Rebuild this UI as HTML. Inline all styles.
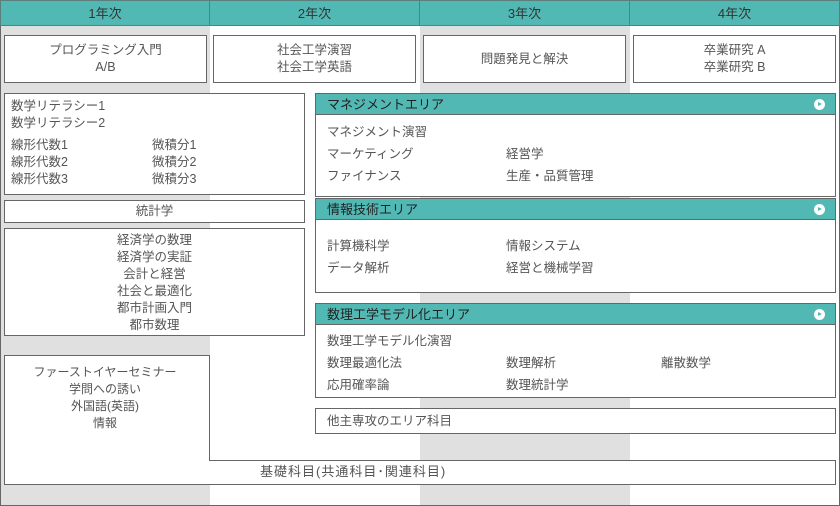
<!DOCTYPE html>
<html><head><meta charset="utf-8"><style>
*{margin:0;padding:0;box-sizing:border-box}
body{width:840px;height:506px;position:relative;overflow:hidden;font-family:"Liberation Sans","Noto Sans CJK JP",sans-serif;color:#555;font-size:12.5px;background:#fff}
.col{position:absolute;top:0;height:506px}
.hd{position:absolute;top:0;height:26px;background:#52b8b4;border-right:1px solid #5a7f7d;border-bottom:1px solid #5a7f7d;text-align:center;line-height:26px;font-size:13px;color:#333}
.b{position:absolute;background:#fff;border:1px solid #666}
.c{text-align:center;display:flex;flex-direction:column;justify-content:center;line-height:17px}
.ah{height:21px;background:#52b8b4;border-bottom:1px solid #666;color:#222;font-size:13px;line-height:21px;padding-left:11px;position:relative}
.ah i{position:absolute;right:10px;top:5px;width:11px;height:11px;border-radius:50%;background:#fff}
.ah i:after{content:"";position:absolute;left:4px;top:3px;border-left:4px solid #52b8b4;border-top:2.5px solid transparent;border-bottom:2.5px solid transparent}
.t{position:absolute;white-space:nowrap}
</style></head><body>
<div class="col" style="left:0;width:210px;background:#e0e0e0"></div>
<div class="col" style="left:420px;width:210px;background:#e0e0e0"></div>
<div style="position:absolute;left:0;top:0;width:840px;height:506px;border:1px solid #666"></div>
<div class="hd" style="left:0;width:210px;border-left:1px solid #5a7f7d;border-top:1px solid #5a7f7d">1年次</div>
<div class="hd" style="left:210px;width:210px;border-top:1px solid #5a7f7d">2年次</div>
<div class="hd" style="left:420px;width:210px;border-top:1px solid #5a7f7d">3年次</div>
<div class="hd" style="left:630px;width:210px;border-top:1px solid #5a7f7d">4年次</div>

<div class="b c" style="left:4px;top:35px;width:203px;height:48px">プログラミング入門<br>A/B</div>
<div class="b c" style="left:213px;top:35px;width:203px;height:48px">社会工学演習<br>社会工学英語</div>
<div class="b c" style="left:423px;top:35px;width:203px;height:48px">問題発見と解決</div>
<div class="b c" style="left:633px;top:35px;width:203px;height:48px">卒業研究 A<br>卒業研究 B</div>

<div class="b" style="left:4px;top:93px;width:301px;height:102px">
<div class="t" style="left:6px;top:4px;line-height:17px">数学リテラシー1<br>数学リテラシー2</div>
<div class="t" style="left:6px;top:43px;line-height:17px">線形代数1<br>線形代数2<br>線形代数3</div>
<div class="t" style="left:147px;top:43px;line-height:17px">微積分1<br>微積分2<br>微積分3</div>
</div>
<div class="b c" style="left:4px;top:200px;width:301px;height:23px">統計学</div>
<div class="b c" style="left:4px;top:228px;width:301px;height:108px;padding-top:2px">経済学の数理<br>経済学の実証<br>会計と経営<br>社会と最適化<br>都市計画入門<br>都市数理</div>

<div class="b" style="left:315px;top:93px;width:521px;height:104px">
<div class="ah">マネジメントエリア<i></i></div>
<div class="t" style="left:11px;top:27px;line-height:22px">マネジメント演習<br>マーケティング<br>ファイナンス</div>
<div class="t" style="left:190px;top:49px;line-height:22px">経営学<br>生産・品質管理</div>
</div>
<div class="b" style="left:315px;top:198px;width:521px;height:95px">
<div class="ah">情報技術エリア<i></i></div>
<div class="t" style="left:11px;top:36px;line-height:22px">計算機科学<br>データ解析</div>
<div class="t" style="left:190px;top:36px;line-height:22px">情報システム<br>経営と機械学習</div>
</div>
<div class="b" style="left:315px;top:303px;width:521px;height:95px">
<div class="ah">数理工学モデル化エリア<i></i></div>
<div class="t" style="left:11px;top:26px;line-height:22px">数理工学モデル化演習<br>数理最適化法<br>応用確率論</div>
<div class="t" style="left:190px;top:48px;line-height:22px">数理解析<br>数理統計学</div>
<div class="t" style="left:345px;top:48px;line-height:22px">離散数学</div>
</div>
<div class="b" style="left:315px;top:408px;width:521px;height:26px;line-height:24px;padding-left:11px">他主専攻のエリア科目</div>

<svg style="position:absolute;left:0;top:0" width="840" height="506"><path d="M4.5 355.5H209.5V460.5H835.5V484.5H4.5Z" fill="#fff" stroke="#666"/></svg>
<div class="t" style="left:0;width:210px;top:364px;text-align:center;line-height:17px;font-size:12px">ファーストイヤーセミナー<br>学問への誘い<br>外国語(英語)<br>情報</div>
<div class="t" style="left:260px;top:463px;line-height:18px;font-size:13px;letter-spacing:1px">基礎科目(共通科目･関連科目)</div>
</body></html>
